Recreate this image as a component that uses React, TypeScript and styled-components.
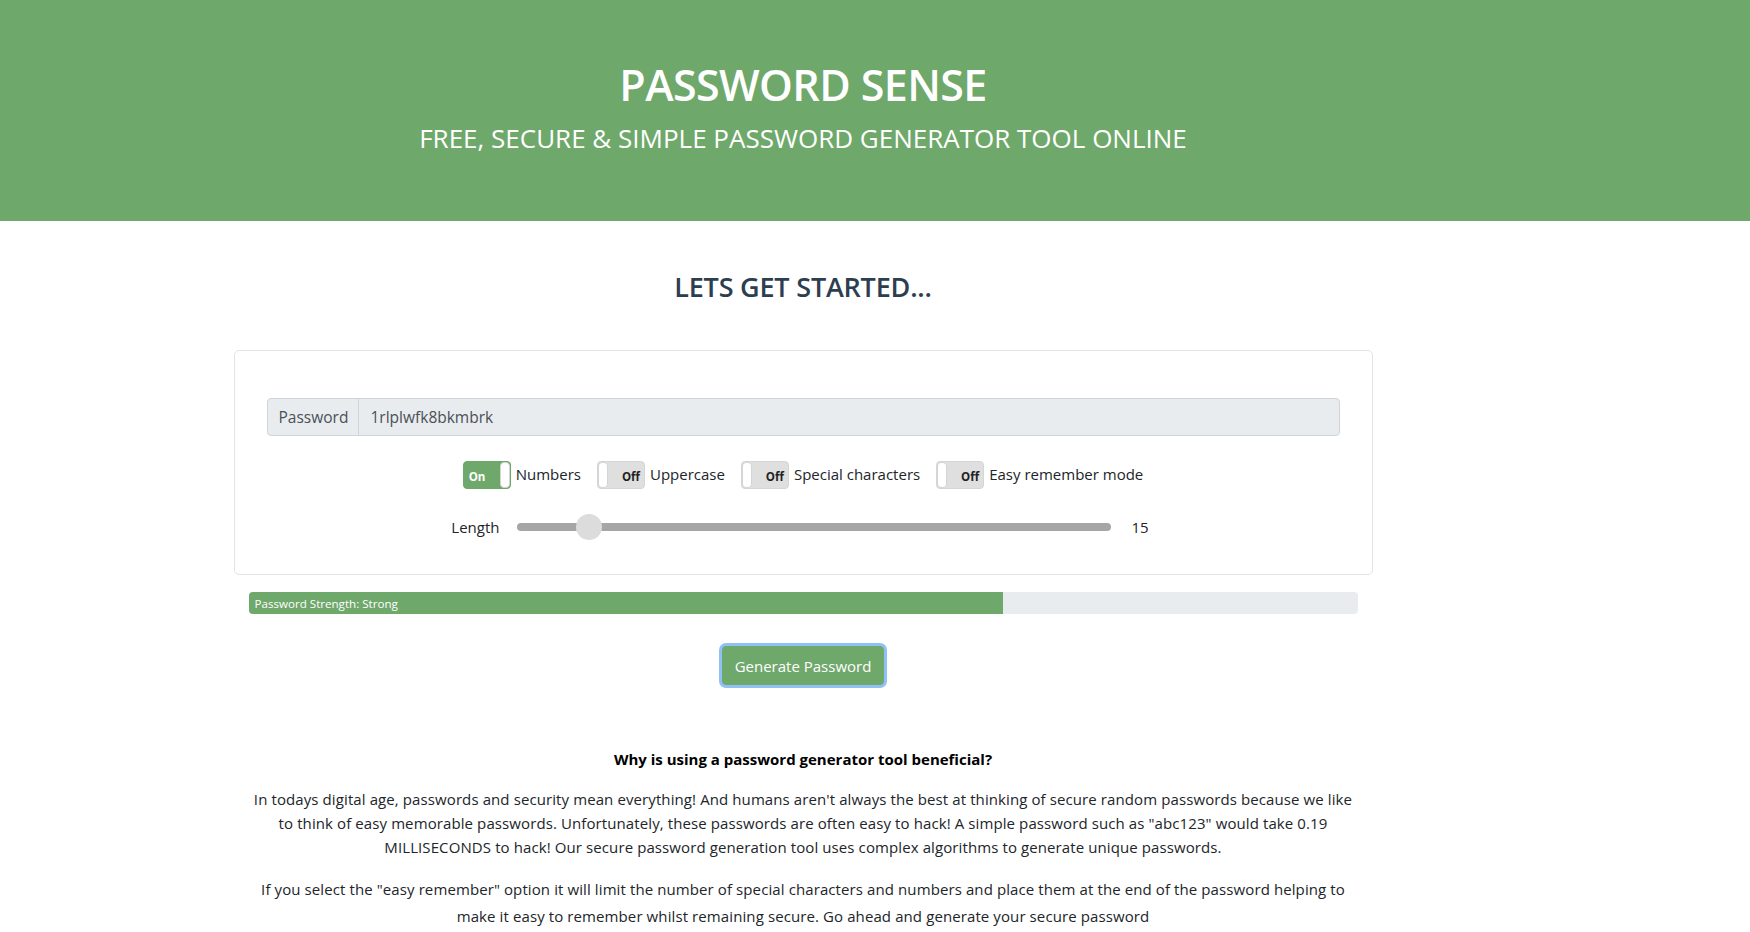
import React, { useState } from "react";
import styled, { createGlobalStyle } from "styled-components";

const GREEN = "#6fa86b";

const GlobalStyle = createGlobalStyle`
  body {
    margin: 0;
    font-family: "Open Sans", "Noto Sans", sans-serif;
    color: #212529;
    background: #ffffff;
  }
  * {
    box-sizing: border-box;
  }
`;

const options = [
  { key: "numbers", label: "Numbers", on: true },
  { key: "uppercase", label: "Uppercase", on: false },
  { key: "special", label: "Special characters", on: false },
  { key: "easy", label: "Easy remember mode", on: false },
];

const App = () => {
  const [length, setLength] = useState(15);
  const [toggles, setToggles] = useState(options);

  const flip = (key: string) => {
    setToggles(toggles.map((t) => (t.key === key ? { ...t, on: !t.on } : t)));
  };

  return (
    <>
      <GlobalStyle />
      <Header>
        <Title>PASSWORD SENSE</Title>
        <Subtitle>FREE, SECURE &amp; SIMPLE PASSWORD GENERATOR TOOL ONLINE</Subtitle>
      </Header>
      <Main>
        <Container>
          <StartHeading>LETS GET STARTED...</StartHeading>
          <Card>
            <InputGroup>
              <Addon>Password</Addon>
              <PasswordInput readOnly value="1rlplwfk8bkmbrk" />
            </InputGroup>
            <ToggleRow>
              {toggles.map((t) => (
                <ToggleItem key={t.key} onClick={() => flip(t.key)}>
                  <Toggle $on={t.on}>
                    <ToggleText $on={t.on}>{t.on ? "On" : "Off"}</ToggleText>
                    <Handle />
                  </Toggle>
                  <ToggleLabel>{t.label}</ToggleLabel>
                </ToggleItem>
              ))}
            </ToggleRow>
            <LengthRow>
              <span>Length</span>
              <Slider
                type="range"
                min={10}
                max={58}
                value={length}
                onChange={(e) => setLength(Number(e.target.value))}
              />
              <span>{length}</span>
            </LengthRow>
          </Card>
          <ProgressWrap>
            <Progress>
              <ProgressBar style={{ width: "68%" }}>Password Strength: Strong</ProgressBar>
            </Progress>
          </ProgressWrap>
          <ButtonRow>
            <GenerateButton>Generate Password</GenerateButton>
          </ButtonRow>
          <Info>
            <Question>Why is using a password generator tool beneficial?</Question>
            <Paragraph>
              In todays digital age, passwords and security mean everything! And humans aren't always the best at
              thinking of secure random passwords because we like to think of easy memorable passwords.
              Unfortunately, these passwords are often easy to hack! A simple password such as "abc123" would take
              0.19 MILLISECONDS to hack! Our secure password generation tool uses complex algorithms to generate
              unique passwords.
            </Paragraph>
            <Paragraph $loose>
              If you select the "easy remember" option it will limit the number of special characters and numbers and
              place them at the end of the password helping to make it easy to remember whilst remaining secure. Go
              ahead and generate your secure password
            </Paragraph>
          </Info>
        </Container>
      </Main>
    </>
  );
};

const Header = styled.header`
  height: 221px;
  background-color: ${GREEN};
  color: #ffffff;
  display: flex;
  flex-direction: column;
  align-items: center;
  padding: 58px 144px 0 0;
`;

const Title = styled.h1`
  margin: 0;
  font-size: 43px;
  font-weight: 600;
  letter-spacing: -0.6px;
  line-height: 54px;
`;

const Subtitle = styled.h2`
  margin: 7px 0 0;
  font-size: 26px;
  font-weight: 400;
  letter-spacing: 0;
  line-height: 38px;
`;

const Main = styled.main`
  padding-right: 144px;
`;

const Container = styled.div`
  width: 1139px;
  margin: 0 auto;
`;

const StartHeading = styled.h2`
  margin: 50px 0 0;
  text-align: center;
  font-size: 27px;
  font-weight: 600;
  letter-spacing: -0.2px;
  line-height: 32px;
  color: #2c3e50;
`;

const Card = styled.section`
  margin-top: 47px;
  border: 1px solid #e2e5e8;
  border-radius: 5px;
  padding: 47px 32px 34px;
  display: flex;
  flex-direction: column;
  gap: 25px;
`;

const InputGroup = styled.div`
  display: flex;
  height: 38px;
  border: 1px solid #ced4da;
  border-radius: 4px;
  background: #e9ecef;
  font-size: 15.5px;
`;

const Addon = styled.span`
  display: flex;
  align-items: center;
  padding: 0 11px;
  width: 91px;
  border-right: 1px solid #ced4da;
  color: #495057;
`;

const PasswordInput = styled.input`
  flex: 1;
  border: none;
  background: transparent;
  padding: 0 12px;
  font: inherit;
  color: #495057;
  outline: none;
`;

const ToggleRow = styled.div`
  display: flex;
  justify-content: center;
  gap: 16px;
`;

const ToggleItem = styled.div`
  display: flex;
  align-items: center;
  gap: 5px;
  cursor: pointer;
`;

const Toggle = styled.div<{ $on: boolean }>`
  display: flex;
  flex-direction: ${(p) => (p.$on ? "row" : "row-reverse")};
  width: 48px;
  height: 28px;
  border-radius: 4px;
  border: 1px solid ${(p) => (p.$on ? GREEN : "#d6d6d6")};
  background: ${(p) => (p.$on ? GREEN : "#dfdfdf")};
  overflow: hidden;
`;

const ToggleText = styled.span<{ $on: boolean }>`
  flex: 1;
  display: flex;
  align-items: center;
  justify-content: ${(p) => (p.$on ? "flex-start" : "flex-end")};
  padding: ${(p) => (p.$on ? "2px 0 0 5px" : "2px 4px 0 0")};
  font-size: 11.5px;
  font-weight: 700;
  color: ${(p) => (p.$on ? "#ffffff" : "#222222")};
`;

const Handle = styled.span`
  width: 10px;
  background: #ffffff;
  border: 1px solid #d4d4d4;
  border-radius: 4px;
`;

const ToggleLabel = styled.span`
  font-size: 15px;
  margin-top: -3px;
`;

const LengthRow = styled.div`
  display: flex;
  justify-content: center;
  align-items: center;
  gap: 17px;
  font-size: 15px;
  margin-left: -6px;

  span:last-child {
    margin-left: 4px;
  }
`;

const Slider = styled.input`
  appearance: none;
  -webkit-appearance: none;
  width: 594px;
  height: 26px;
  margin: 0;
  background: transparent;
  outline: none;

  &::-webkit-slider-runnable-track {
    height: 8px;
    border-radius: 4px;
    background: #a6a6a6;
  }

  &::-webkit-slider-thumb {
    -webkit-appearance: none;
    width: 26px;
    height: 26px;
    margin-top: -9px;
    border-radius: 50%;
    background: #dcdcdc;
    border: none;
    cursor: pointer;
  }
`;

const ProgressWrap = styled.div`
  padding: 0 15px;
  margin-top: 17px;
`;

const Progress = styled.div`
  display: flex;
  height: 22px;
  border-radius: 4px;
  background: #e9ecef;
  overflow: hidden;
`;

const ProgressBar = styled.div`
  display: flex;
  align-items: center;
  padding-left: 6px;
  background: ${GREEN};
  color: #ffffff;
  font-size: 11.6px;
`;

const ButtonRow = styled.div`
  display: flex;
  justify-content: center;
  margin-top: 32px;
`;

const GenerateButton = styled.button`
  height: 39px;
  padding: 0 12px;
  border: 1px solid ${GREEN};
  border-radius: 4px;
  background: ${GREEN};
  color: #ffffff;
  font-family: inherit;
  font-size: 15px;
  box-shadow: 0 0 0 3px #8fc1f4;
  cursor: pointer;
`;

const Info = styled.div`
  padding: 0 15px;
  margin-top: 62px;
  text-align: center;
`;

const Question = styled.p`
  margin: 0 0 16px;
  font-size: 15px;
  font-weight: 700;
  line-height: 24px;
  color: #000000;
`;

const Paragraph = styled.p<{ $loose?: boolean }>`
  margin: 0 0 17px;
  font-size: 15px;
  letter-spacing: 0.1px;
  line-height: ${(p) => (p.$loose ? "27px" : "24px")};
`;

export default App;
